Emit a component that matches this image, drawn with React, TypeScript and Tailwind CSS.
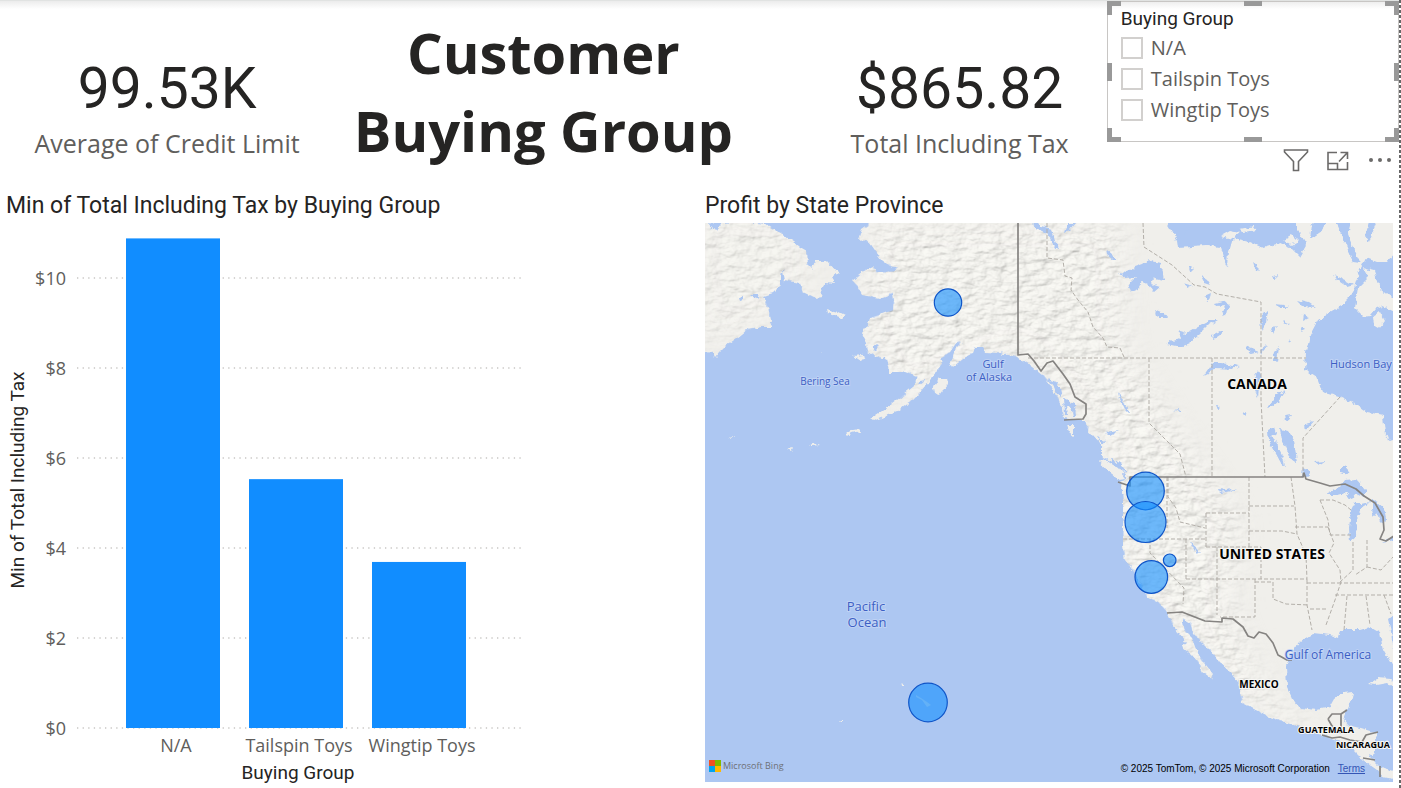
const segoe = "font-['Open_Sans','Noto_Sans',sans-serif]";

const bars = [
  { label: "N/A", x: 126, labelX: 176, value: 10.88 },
  { label: "Tailspin Toys", x: 249, labelX: 299, value: 5.53 },
  { label: "Wingtip Toys", x: 372, labelX: 422, value: 3.69 },
];
const ticks = [0, 2, 4, 6, 8, 10];
const yFor = (value: number) => 728 - value * 45;

const groups = ["N/A", "Tailspin Toys", "Wingtip Toys"];

const bubbles = [
  { x: 948, y: 302.5, r: 13.7 },
  { x: 1145.5, y: 491, r: 18.8 },
  { x: 1145.5, y: 522, r: 20.5 },
  { x: 1169.7, y: 560.3, r: 6.3 },
  { x: 1151.3, y: 577, r: 16.3 },
  { x: 928, y: 702.5, r: 19.3 },
];

const landPaths = [
  "M705 223 L757 223 765 224 778 232 785 237 793 242 800 248 807 252 808 265 812 269 815 261 827 261 838 273 832 278 835 283 825 282 820 290 822 297 815 298 803 292 800 283 785 280 783 270 780 275 780 285 772 293 763 296 767 305 772 322 770 327 762 327 747 330 737 338 727 345 720 352 715 358 712 352 700 350 700 218Z",
  "M878 218 L862 229 859 238 870 243 877 253 882 260 890 266 897 267 895 271 885 272 877 272 873 267 863 272 852 281 858 287 862 295 880 298 893 293 894 300 893 310 882 314 870 318 868 325 862 333 867 343 868 352 882 359 885 356 888 362 890 372 905 372 912 374 918 376 913 388 900 398 888 407 870 419 873 421 897 412 910 402 920 392 930 380 937 370 942 364 940 359 950 352 957 342 962 343 955 350 953 357 950 365 952 367 963 358 973 353 975 347 983 347 985 352 1000 353 1017 357 1023 360 1033 367 1043 375 1050 385 1057 397 1062 408 1063 418 1077 420 1085 420 1087 428 1093 435 1102 445 1102 458 1113 462 1123 470 1128 478 1120 482 1123 490 1123 503 1123 530 1123 547 1125 560 1135 573 1142 587 1147 597 1158 602 1167 612 1173 625 1180 633 1187 643 1182 647 1192 655 1198 662 1203 672 1212 679 1213 675 1205 665 1200 657 1195 647 1192 638 1186 632 1182 623 1182 618 1190 623 1193 633 1203 643 1210 650 1220 662 1232 673 1238 682 1240 690 1242 702 1253 708 1270 717 1287 723 1300 727 1317 733 1330 738 1340 742 1353 750 1363 760 1377 770 1383 777 1398 780 1398 772 1380 767 1373 760 1375 750 1377 733 1360 728 1347 725 1343 720 1347 710 1352 698 1353 692 1343 693 1335 698 1330 707 1317 710 1300 708 1292 698 1287 687 1286 667 1292 653 1300 642 1313 633 1330 635 1338 638 1340 630 1360 630 1370 627 1380 633 1383 650 1390 662 1394 666 1394 650 1390 627 1388 618 1398 610 1398 218Z",
  "M933 388 L940 378 947 378 948 385 940 395 934 393Z",
  "M1098 460 L1107 461 1118 468 1126 478 1119 479 1108 471Z",
  "M1067 425 L1074 425 1074 436 1069 432Z",
  "M827 309 L833 311 837 312 845 316 842 318 834 315 828 313Z",
  "M853 356 L863 355 864 359 859 360Z",
  "M846 434 L853 429 859 428 860 431 852 433 848 436Z",
  "M808 447 L814 443 820 446 813 447Z M787 449 L793 448 791 451Z M729 437 L734 437 733 438Z M820 353 L823 353 822 354Z",
  "M1369 684 L1378 678 1390 679 1398 683 1398 686 1387 683 1376 685Z",
  "M901 686 l4 0 -2 -3Z M840 721 l3 0 -1 -2Z",
];

const waterPaths = [
  "M1330 312 L1318 320 1310 335 1306 352 1305 370 1317 378 1322 392 1340 397 1357 405 1367 412 1383 415 1385 435 1398 444 1398 312 1383 305 1375 309 1370 315 1363 316 1355 308 1358 287 1368 277 1363 268 1374 271 1380 288 1398 303 1398 248 1387 262 1377 262 1366 258 1361 268 1357 278 1352 295 1342 305Z",
  "M1173 218 L1177 240 1178 247 1207 245 1220 247 1223 257 1228 268 1229 252 1233 238 1250 242 1263 248 1280 243 1290 247 1300 257 1307 245 1302 237 1297 230 1297 218Z",
  "M1177 240 L1190 229 1175 218 1164 218 1170 228Z",
  "M1335 218 L1352 218 1348 235 1354 250 1360 263 1353 262 1345 243Z M1370 218 l8 0 -9 24 -4 -6Z",
  "M1313 218 L1330 218 1322 231 1310 239Z",
  "M1334 275 L1345 280 1354 285 1347 287 1338 281Z",
  "M1033 218 L1041 226 1052 229 1055 240 1059 248 1055 249 1050 237 1042 232 1032 224Z M1068 223 L1076 223 1070 230 1064 232Z",
  "M1118 272 L1127 273 1134 267 1143 264 1148 260 1160 263 1163 273 1164 280 1155 278 1151 284 1160 287 1154 292 1147 284 1142 282 1138 290 1133 292 1127 288 1131 282 1136 277 1126 278Z M1106 250 l6 5 5 5 -4 0 -6 -5Z M1154 309 l7 3 -4 4Z",
  "M1166 344 L1181 338 1177 330 1187 333 1202 324 1210 320 1218 320 1208 326 1200 334 1190 343 1181 347Z M1215 303 l8 -2 6 4 -2 10 -5 -3 3 -7 -8 1Z M1212 335 l8 -4 3 2 -6 4 -4 2Z",
  "M1157 313 l8 0 3 4 -8 0Z M1189 266 l5 3 -4 4Z M1201 275 l6 4 4 6 -6 -2Z M1204 297 l7 -3 -2 6Z M1182 283 l10 3 -4 2Z M1253 263 l4 3 4 4 -6 -1Z M1273 276 l5 -1 -3 5Z",
  "M1261 315 l7 -4 -2 12 -4 8Z M1274 304 l9 1 6 3 -8 0Z M1297 300 l12 3 6 4 -12 -1Z M1303 314 l7 3 -8 4Z M1271 329 l6 -2 -4 6Z M1283 320 l6 3 -4 2Z M1302 327 l3 3 -5 2Z M1288 338 l3 4 -2 1Z M1246 347 l13 5 -8 2Z M1261 349 l6 -5 -5 11Z M1274 352 l5 -5 -2 15 -4 -3Z",
  "M1204 376 L1213 363 1221 363 1240 366 1232 369 1216 368 1210 373Z M1253 378 l5 -7 3 6 -3 20 -4 -8Z M1266 409 L1276 396 1285 391 1278 401 1270 408Z M1284 415 l9 -1 -3 5 -5 2Z M1216 404 l5 4 -3 1Z M1241 414 l5 -1 -2 4Z M1305 424 l8 -2 -7 9Z M1171 411 l10 -1 0 2Z",
  "M1268 430 L1274 427 1276 433 1272 436 1277 447 1284 460 1285 466 1281 463 1275 452 1269 441Z M1280 429 L1288 431 1294 441 1297 462 1291 460 1286 447 1282 440Z M1314 462 l12 -1 -7 5Z M1303 468 l6 3 1 7 -8 -2Z M1341 465 l7 1 -1 8 -6 -2Z",
  "M1325 495 L1340 487 1345 480 1356 479 1366 490 1366 497 1357 493 1352 499 1345 497 1349 492 1338 495Z",
  "M1355 504 L1362 504 1370 502 1360 510 1357 520 1356 537 1350 542 1349 528 1351 512Z",
  "M1372 500 L1377 502 1384 508 1386 518 1384 525 1380 521 1378 512 1374 518 1372 510Z M1382 542 l12 -6 0 4 -11 2Z",
  "M1190 542 l7 6 4 5 -4 -1 -6 -6Z M1219 489 l9 1 8 -3 -5 4 -10 2Z M1369 754 l6 3 -4 3Z",
  "M1047 379 L1055 382 1060 389 1062 397 1057 395 1053 386Z M1063 398 l12 5 1 14 -3 -1 -2 -9 -5 -1 1 9 -3 0Z M1118 392 l5 8 7 14 -5 -5 -6 -12Z M1105 432 l14 -2 -9 5Z M1098 437 l8 3 -3 4Z M1112 458 l9 6 6 9 -6 -3 -9 -8Z M919 381 l6 -1 -5 4Z M875 346 l4 1 -4 4 -2 -3Z M739 297 l4 -1 0 3 -3 1Z M750 294 l7 0 3 5 -6 -2Z M708 223 l14 0 -5 8 -5 -1Z",
];

const provinceLines =
  "M1047 223 L1047 258 1063 260 1065 276 1072 278 1071 290 1078 300 1088 312 1093 327 1103 338 1107 347 1120 348 1124 357 M1028 358 H1306 M1143 223 L1144 247 1172 265 1194 285 1205 287 1217 294 1261 302 V400 L1265 477 M1149 358 V423 L1164 438 1180 454 1186 477 M1212 358 V477 M1340 397 L1303 438 V476 M1167 477 V528 M1123 539 H1206 M1150 539 V553 L1184 588 1183 604 M1168 477 V497 L1176 508 1180 522 1205 528 M1206 513 V547 M1206 513 H1249 M1186 539 V580 M1217 547 V615 M1249 477 V547 M1249 506 H1294 M1249 531 H1282 L1297 534 M1291 477 L1295 506 1297 534 1306 555 1307 580 M1206 547 H1261 V579 M1186 579 H1307 M1255 579 V617 H1220 M1255 582 H1273 V599 L1286 604 1309 605 M1307 580 V605 L1312 630 M1295 527 H1328 M1328 527 L1334 543 1329 553 1340 570 1341 582 1335 600 1326 625 M1307 583 H1338 M1310 609 H1328 M1320 500 L1328 520 1330 535 H1351 M1353 542 V570 L1339 583 M1367 540 V567 L1355 575 M1338 583 H1393 M1335 595 H1393 M1347 596 L1344 630 M1366 596 L1370 625 M1384 595 L1391 614 M1367 567 L1381 570 1393 557 M1320 500 L1333 500 1345 505 1351 510";

const countryLines =
  "M1018 223 V355 L1028 354 1034 361 1041 371 1047 363 1053 361 1063 374 1070 384 1075 397 1086 404 1086 414 1083 419 1064 420 M1118 482 L1130 486 1130 477 H1303 L1304 473 1306 479 1313 481 1320 483 1330 486 1345 484 1356 489 1364 496 1375 503 1383 517 1384 530 1380 539 1386 541 1394 536 M1167 613 L1182 612 1205 621 1222 622 1222 618 1233 619 1243 627 1248 636 1254 638 1259 632 1266 634 1273 643 1278 655 1287 660 1292 660 M1328 719 L1332 714 1341 714 1341 733 1332 726 1328 719 M1341 714 L1347 710 M1322 735 L1332 738 1340 737 1350 740 1362 742 1366 735 1378 732 M1363 758 L1375 760 M1380 766 V777";

function Kpi({ value, label }: { value: string; label: string }) {
  return (
    <div className="flex flex-col items-center pt-14 text-center">
      <p className="text-[57px] leading-[64px] text-[#252423]">{value}</p>
      <p className={`${segoe} mt-1.5 text-[25px] leading-8 text-[#605e5c]`}>{label}</p>
    </div>
  );
}

function Slicer() {
  return (
    <section className="relative h-[141px] border border-[#c8c6c4] px-[13px] pt-1 text-[#252423]">
      <span className="absolute -left-px -top-px h-3.5 w-3.5 border-l-[5px] border-t-[5px] border-[#999]" />
      <span className="absolute -right-px -top-px h-3.5 w-3.5 border-r-[5px] border-t-[5px] border-[#999]" />
      <span className="absolute -bottom-px -left-px h-3.5 w-3.5 border-b-[5px] border-l-[5px] border-[#999]" />
      <span className="absolute -bottom-px -right-px h-3.5 w-3.5 border-b-[5px] border-r-[5px] border-[#999]" />
      <span className="absolute -top-px left-1/2 h-[5px] w-[18px] -translate-x-1/2 bg-[#999]" />
      <span className="absolute -bottom-px left-1/2 h-[5px] w-[18px] -translate-x-1/2 bg-[#999]" />
      <span className="absolute -left-px top-1/2 h-[18px] w-[5px] -translate-y-1/2 bg-[#999]" />
      <span className="absolute -right-px top-1/2 h-[18px] w-[5px] -translate-y-1/2 bg-[#999]" />
      <fieldset>
        <legend className="text-[19px] leading-[26px]">Buying Group</legend>
        {groups.map((name) => (
          <label key={name} className={`${segoe} flex h-[31px] items-center gap-2 text-xl text-[#605e5c]`}>
            <input type="checkbox" className="h-[22px] w-[22px] appearance-none border-2 border-[#d2d0ce] bg-white checked:bg-[#605e5c]" />
            {name}
          </label>
        ))}
      </fieldset>
    </section>
  );
}

function VisualActions() {
  return (
    <div className="flex justify-end gap-4 pr-1.5 pt-[5px] text-[#6b6a69]">
      <button type="button" aria-label="Filters">
        <svg width="26" height="26" viewBox="0 0 26 26" fill="none" stroke="currentColor" strokeWidth="1.6">
          <path d="M1.5 3 H24.5 V5 L15.5 14.5 V23.5 H10.5 V14.5 L1.5 5Z" />
        </svg>
      </button>
      <button type="button" aria-label="Focus mode">
        <svg width="26" height="26" viewBox="0 0 26 26" fill="none" stroke="currentColor" strokeWidth="1.6">
          <path d="M12 5.5 H3 V22.5 H22.5 V15 M3 16.5 H12.5 V22.5 M14 14.5 L22.5 5.5 M15.5 5.5 H22.5 V12" />
        </svg>
      </button>
      <button type="button" aria-label="More options">
        <svg width="26" height="26" viewBox="0 0 26 26" fill="currentColor">
          <circle cx="4" cy="13" r="2" />
          <circle cx="13" cy="13" r="2" />
          <circle cx="22" cy="13" r="2" />
        </svg>
      </button>
    </div>
  );
}

function BarChart() {
  return (
    <svg viewBox="0 223 700 563" className="block w-full" role="img" aria-label="Min of Total Including Tax by Buying Group">
      {ticks.map((t) => (
        <g key={t}>
          <line x1="77" x2="522" y1={yFor(t)} y2={yFor(t)} stroke="#c8c6c4" strokeWidth="1.3" strokeDasharray="1.3 4.3" />
          <text x="66" y={yFor(t) + 7} textAnchor="end" className={`${segoe} fill-[#605e5c] text-[18px]`}>{`$${t}`}</text>
        </g>
      ))}
      {bars.map((b) => (
        <g key={b.label}>
          <rect x={b.x} y={yFor(b.value)} width="94" height={b.value * 45} fill="#118dff" />
          <text x={b.labelX} y="752" textAnchor="middle" className={`${segoe} fill-[#605e5c] text-[18px]`}>{b.label}</text>
        </g>
      ))}
      <text x="298" y="779" textAnchor="middle" className="fill-[#252423] text-[19px]">Buying Group</text>
      <text transform="translate(24 480) rotate(-90)" textAnchor="middle" className="fill-[#252423] text-[19px]">Min of Total Including Tax</text>
    </svg>
  );
}

function ProfitMap() {
  return (
    <div className="relative">
      <svg viewBox="705 223 688 559" className="block w-full bg-[#adc7f2]" role="img" aria-label="Profit by State Province">
        <defs>
          <filter id="coast" x="0" y="0" width="100%" height="100%">
            <feTurbulence type="fractalNoise" baseFrequency="0.16" numOctaves="3" seed="4" result="n" />
            <feDisplacementMap in="SourceGraphic" in2="n" scale="6" xChannelSelector="R" yChannelSelector="G" />
          </filter>
          <filter id="relief" x="0" y="0" width="100%" height="100%">
            <feTurbulence type="fractalNoise" baseFrequency="0.07 0.13" numOctaves="4" seed="9" result="n" />
            <feDiffuseLighting in="n" surfaceScale="3" diffuseConstant="1.1" lightingColor="#f6f5f1">
              <feDistantLight azimuth="225" elevation="62" />
            </feDiffuseLighting>
          </filter>
          <filter id="soft" x="-20%" y="-20%" width="140%" height="140%">
            <feGaussianBlur stdDeviation="14" />
          </filter>
          <clipPath id="land">
            {landPaths.slice(0, 2).map((d) => <path key={d} d={d} />)}
          </clipPath>
          <mask id="mountains" maskUnits="userSpaceOnUse" x="705" y="223" width="688" height="559">
            <g filter="url(#soft)" fill="#fff">
              <path d="M690 210 H810 V300 L700 350Z" opacity="0.7" />
              <path d="M870 220 H1120 L1125 350 1190 450 1240 520 1230 610 1270 700 1330 745 1270 725 1120 590 1110 450 1020 350 900 400 860 330Z" />
            </g>
          </mask>
        </defs>
        <g filter="url(#coast)">
          <rect x="705" y="223" width="688" height="559" fill="#adc7f2" />
          {landPaths.map((d) => <path key={d} d={d} fill="#f0efeb" />)}
        </g>
        <g clipPath="url(#land)">
          <g mask="url(#mountains)">
            <rect x="705" y="223" width="688" height="559" filter="url(#relief)" opacity="0.6" />
          </g>
        </g>
        <g filter="url(#coast)">
          {waterPaths.map((d) => <path key={d} d={d} fill="#adc7f2" />)}
          <path d="M1373 317 L1380 312 1385 321 1379 328 1374 325Z" fill="#f0efeb" />
          <path d="M1221 236 l9 -5 10 2 -8 6Z M1283 240 l9 -5 6 6 -7 4Z M1240 229 l14 -3 3 4 -14 2Z" fill="#f0efeb" />
        </g>
        <path d={provinceLines} fill="none" stroke="#b3afa9" strokeWidth="1" strokeDasharray="4 2" />
        <path d={countryLines} fill="none" stroke="#858381" strokeWidth="1.7" strokeLinejoin="round" />
        <path d="M916 695 l5 3 6 4 4 3 -4 2 -5 -7 -6 -3Z" fill="#dfe6ec" />
        <g className={`${segoe} fill-[#3c5fc4] stroke-[#c0d3f5] text-[11px]`} strokeWidth="2" paintOrder="stroke" textAnchor="middle">
          <text x="825" y="385" className="text-[10px]">Bering Sea</text>
          <text x="993" y="368">Gulf</text>
          <text x="989" y="381">of Alaska</text>
          <text x="1330" y="368" textAnchor="start">Hudson Bay</text>
          <text x="1328" y="659" className="text-[12px]">Gulf of America</text>
          <text x="866" y="611" className="text-[13px]">Pacific</text>
          <text x="867" y="627" className="text-[13px]">Ocean</text>
        </g>
        <g className={`${segoe} fill-black stroke-[#f7f7f5] font-bold`} strokeWidth="2" paintOrder="stroke" textAnchor="middle">
          <text x="1257" y="389" className="text-[14px]">CANADA</text>
          <text x="1272" y="559" className="text-[14px]">UNITED STATES</text>
          <text x="1259" y="688" className="text-[10px]">MEXICO</text>
          <text x="1326" y="733" className="text-[9px]">GUATEMALA</text>
          <text x="1363" y="748" className="text-[9px]">NICARAGUA</text>
        </g>
        {bubbles.map((b) => (
          <circle key={`${b.x}-${b.y}`} cx={b.x} cy={b.y} r={b.r} fill="#118dff" fillOpacity="0.6" stroke="#0f55c8" strokeWidth="1.2" />
        ))}
      </svg>
      <div className={`${segoe} absolute bottom-2 left-1 flex items-center gap-0.5 text-[9px] leading-4 text-[#6d7076]`}>
        <svg width="12" height="12" viewBox="0 0 12 12">
          <path fill="#f25022" d="M0 0h6v6H0z" />
          <path fill="#7fba00" d="M6 0h6v6H6z" />
          <path fill="#00a4ef" d="M0 6h6v6H0z" />
          <path fill="#ffb900" d="M6 6h6v6H6z" />
        </svg>
        Microsoft Bing
      </div>
      <div className="absolute bottom-1.5 right-7 flex gap-2 font-['Liberation_Sans',sans-serif] text-[10px] leading-[14px] text-black">
        <span>© 2025 TomTom, © 2025 Microsoft Corporation</span>
        <a href="#terms" className="text-[#3455b5] underline">Terms</a>
      </div>
    </div>
  );
}

export default function App() {
  return (
    <div className="flex min-h-screen bg-white font-['Roboto',sans-serif]">
      <main className="min-w-0 flex-1 border-t border-[#e1e3e2] bg-linear-to-b from-[#ececec] to-white to-[8px]">
        <header className="grid h-[189px] grid-cols-[334fr_418fr_354fr_292fr]">
          <Kpi value="99.53K" label="Average of Credit Limit" />
          <h1 className={`${segoe} pt-3 text-center text-[56px] font-bold leading-[78px] text-[#252423]`}>
            Customer
            <br />
            Buying Group
          </h1>
          <div className="pl-[60px]">
            <Kpi value="$865.82" label="Total Including Tax" />
          </div>
          <div>
            <Slicer />
            <VisualActions />
          </div>
        </header>
        <div className="grid grid-cols-[700fr_699fr] text-[#252423]">
          <section>
            <h2 className="pb-px pl-1.5 text-[23px] leading-8">Min of Total Including Tax by Buying Group</h2>
            <BarChart />
          </section>
          <section className="pl-[5px] pr-1.5">
            <h2 className="pb-px text-[23px] leading-8">Profit by State Province</h2>
            <ProfitMap />
          </section>
        </div>
      </main>
      <div className="w-0.5 bg-[repeating-linear-gradient(to_bottom,#666_0px,#666_3px,transparent_3px,transparent_5px)]" />
    </div>
  );
}
